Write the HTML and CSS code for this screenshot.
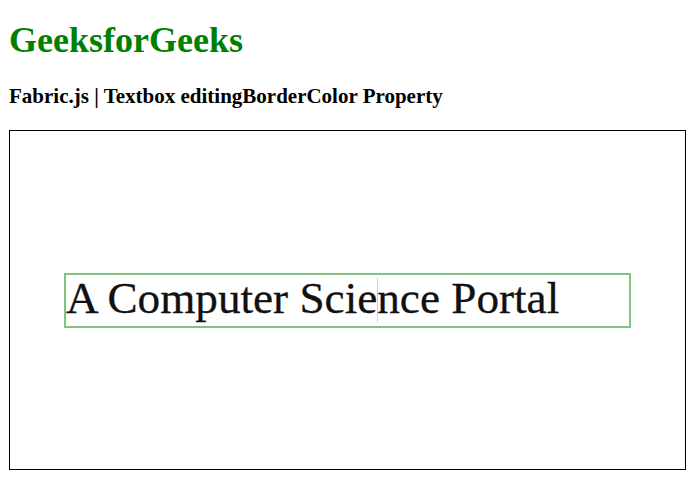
FILE: index.html
```html
<!DOCTYPE html>
<html>
<head>
<meta charset="utf-8">
<title>Fabric.js | Textbox editingBorderColor Property</title>
<link rel="stylesheet" href="styles.css">
</head>
<body>
<h1 class="title">GeeksforGeeks</h1>
<h3 class="subtitle">Fabric.js | Textbox editingBorderColor Property</h3>
<div class="canvas">
  <div class="textbox">A Computer Scie<span class="caret"></span>nce Portal</div>
</div>
</body>
</html>
```

FILE: styles.css
```css
html, body {
  margin: 0;
  padding: 0;
  background: #fff;
}
body {
  padding: 0 9px;
  font-family: "Liberation Serif", "Times New Roman", serif;
  color: #000;
}
.title {
  margin: 20px 0 0;
  font-size: 36px;
  line-height: 40px;
  font-weight: bold;
  color: #008000;
}
.subtitle {
  margin: 24px 0 0;
  font-size: 21px;
  line-height: 24px;
  font-weight: bold;
}
.canvas {
  margin-top: 22px;
  width: 675px;
  height: 338px;
  border: 1px solid #000;
  position: relative;
}
.textbox {
  position: absolute;
  left: 54px;
  top: 142px;
  width: 567px;
  height: 55px;
  box-sizing: border-box;
  border: 2px solid rgba(0, 140, 0, 0.5);
  padding: 1px 0 0 0;
  font-family: "Liberation Serif", "Times New Roman", serif;
  font-size: 45.2px;
  line-height: 45px;
  color: #111;
  -webkit-text-stroke: 0.3px #111;
  white-space: nowrap;
}
.caret {
  display: inline-block;
  width: 0;
  height: 44px;
  border-left: 1px solid rgba(0, 0, 0, 0.18);
  margin-right: -1px;
  vertical-align: -9px;
}
```
